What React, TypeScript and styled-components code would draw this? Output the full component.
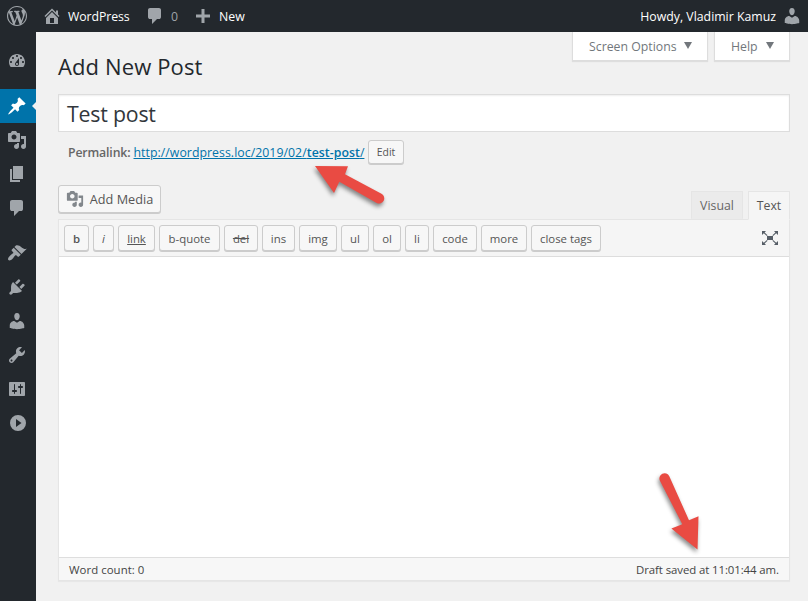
import React from "react";
import styled, { createGlobalStyle } from "styled-components";

const GlobalStyle = createGlobalStyle`
  * { box-sizing: border-box; }
  body {
    margin: 0;
    background: #f1f1f1;
    font-family: "Open Sans", "Noto Sans", sans-serif;
    font-size: 12.3px;
    color: #444;
    overflow: hidden;
  }
`;

const paths = {
  wordpress:
    "M20 10c0-5.51-4.49-10-10-10C4.48 0 0 4.49 0 10c0 5.52 4.48 10 10 10 5.51 0 10-4.48 10-10zM7.78 15.37L4.37 6.22c.55-.02 1.17-.08 1.17-.08.5-.06.44-1.13-.06-1.11 0 0-1.45.11-2.37.11-.18 0-.37 0-.58-.01C4.12 2.69 6.87 1.11 10 1.11c2.33 0 4.45.87 6.05 2.34-.68-.11-1.65.39-1.65 1.58 0 .74.45 1.36.9 2.1.35.61.55 1.36.55 2.46 0 1.49-1.4 5-1.4 5l-3.03-8.37c.54-.02.82-.17.82-.17.5-.05.44-1.25-.06-1.22 0 0-1.44.12-2.38.12-.87 0-2.33-.12-2.33-.12-.5-.03-.56 1.2-.06 1.22l.92.08 1.26 3.41zM17.41 10c.24-.64.74-1.87.43-4.25.7 1.29 1.05 2.71 1.05 4.25 0 3.29-1.73 6.24-4.4 7.78.97-2.59 1.94-5.2 2.92-7.78zM6.1 18.09C3.12 16.65 1.11 13.53 1.11 10c0-1.3.23-2.48.72-3.59C3.25 10.3 4.67 14.2 6.1 18.09zm4.03-6.63l2.58 6.98c-.86.29-1.76.45-2.71.45-.79 0-1.57-.11-2.29-.33.81-2.38 1.62-4.74 2.42-7.1z",
  home: "M16 8.5l1.53 1.53-1.06 1.06L10 4.6l-6.47 6.49-1.06-1.06L10 2.5l4 4v-2h2v4zm-6-2.46l6 5.99V18H4v-5.97zM12 17v-5H8v5h4z",
  comment:
    "M5 2h9q.82 0 1.41.59T16 4v7q0 .82-.59 1.41T14 13h-2l-5 5v-5H5q-.82 0-1.41-.59T3 11V4q0-.82.59-1.41T5 2z",
  plus: "M17 8.5v3h-5.5V17h-3v-5.500H3v-3h5.500V3h3v5.500z",
  dashboard:
    "M3.76 16h12.48c1.1-1.37 1.76-3.11 1.76-5 0-4.42-3.58-8-8-8s-8 3.58-8 8c0 1.89.66 3.63 1.76 5zM10 4c.55 0 1 .45 1 1s-.45 1-1 1-1-.45-1-1 .45-1 1-1zM6 6c.55 0 1 .45 1 1s-.45 1-1 1-1-.45-1-1 .45-1 1-1zm8 0c.55 0 1 .45 1 1s-.45 1-1 1-1-.45-1-1 .45-1 1-1zm-5.370 5.550L12 7v6c0 1.100-.9 2-2 2s-2-.9-2-2c0-.57.24-1.080.63-1.450zM4 10c.55 0 1 .45 1 1s-.45 1-1 1-1-.45-1-1 .45-1 1-1zm12 0c.55 0 1 .45 1 1s-.45 1-1 1-1-.45-1-1 .45-1 1-1zm-5 3c0-.55-.45-1-1-1s-1 .45-1 1 .45 1 1 1 1-.45 1-1z",
  pin: "M10.44 3.02l1.82-1.82 6.36 6.35-1.83 1.82c-1.05-.68-2.48-.57-3.41.36l-.75.75c-.92.93-1.04 2.35-.35 3.41l-1.83 1.82-2.41-2.41-2.8 2.79c-.42.42-3.38 2.71-3.8 2.29s1.86-3.39 2.28-3.81l2.79-2.79L4.1 9.36l1.83-1.82c1.05.69 2.48.57 3.4-.36l.75-.75c.93-.92 1.05-2.35.36-3.41z",
  media:
    "M13 11V4c0-.55-.45-1-1-1h-1.67L9 1H5L3.67 3H2c-.55 0-1 .45-1 1v7c0 .55.45 1 1 1h10c.55 0 1-.45 1-1zM7 4.5c1.38 0 2.500 1.120 2.500 2.500S8.380 9.500 7 9.500 4.500 8.380 4.500 7 5.620 4.500 7 4.500zM14 6h5v10.500c0 1.380-1.120 2.500-2.500 2.500S14 17.880 14 16.500s1.120-2.500 2.500-2.500c.17 0 .34.02.5.05V9h-3V6zm-4 8.050V13h2v3.500c0 1.380-1.120 2.500-2.500 2.500S7 17.880 7 16.500 8.120 14 9.500 14c.17 0 .34.02.5.05z",
  page: "M6 15V2h10v13H6zm-1 1h8v2H3V5h2v11z",
  brush:
    "M14.48 11.06L7.41 3.99l1.5-1.5c.5-.56 2.3-.47 3.51.32 1.21.8 1.43 1.28 2.91 2.1 1.18.64 2.45 1.26 4.45.85zm-.71.71L6.7 4.7 4.93 6.47c-.39.39-.39 1.02 0 1.41l1.06 1.06c.39.39.39 1.03 0 1.42-.6.6-1.43 1.11-2.21 1.69-.35.26-.7.53-1.01.84C1.43 14.23.4 16.08 1.4 17.07c.99 1 2.84-.03 4.18-1.36.31-.31.58-.66.85-1.02.57-.78 1.08-1.61 1.69-2.21.39-.39 1.02-.39 1.41 0l1.06 1.06c.39.39 1.02.39 1.41 0z",
  plug: "M13.11 4.36L9.87 7.6 8 5.73l3.24-3.24c.35-.34 1.05-.2 1.56.32.52.51.66 1.21.31 1.55zm-8 1.77l.91-1.12 9.01 9.01-1.19.84c-.71.71-2.63 1.16-3.82 1.16H6.14L4.9 17.26c-.59.59-1.54.59-2.12 0-.59-.58-.59-1.53 0-2.12l1.24-1.24v-3.88c0-1.13.4-3.19 1.09-3.89zm7.26 3.97l3.24-3.24c.34-.35 1.04-.21 1.55.31.52.51.66 1.21.31 1.55l-3.24 3.25z",
  user: "M10 9.25c-2.27 0-2.73-3.44-2.73-3.44C7 4.02 7.82 2 9.97 2c2.16 0 2.98 2.02 2.71 3.81 0 0-.41 3.44-2.68 3.44zm0 2.57L12.72 10c2.39 0 4.52 2.33 4.52 4.53v2.49s-3.65 1.13-7.24 1.13c-3.65 0-7.24-1.13-7.24-1.13v-2.49c0-2.25 1.94-4.48 4.47-4.48z",
  wrench:
    "M16.68 9.77c-1.34 1.34-3.3 1.67-4.95.99l-5.41 6.52c-.99.99-2.59.99-3.58 0s-.99-2.59 0-3.57l6.52-5.42c-.68-1.65-.35-3.61.99-4.95 1.28-1.28 3.12-1.62 4.72-1.06l-2.89 2.89 2.82 2.82 2.86-2.87c.53 1.58.18 3.39-1.08 4.65zM3.81 16.21c.4.39 1.04.39 1.43 0 .4-.4.4-1.04 0-1.43-.39-.4-1.03-.4-1.43 0-.39.39-.39 1.03 0 1.43z",
  sliders:
    "M18 16V4c0-.55-.45-1-1-1H3c-.55 0-1 .45-1 1v12c0 .55.45 1 1 1h14c.55 0 1-.45 1-1zM8 11h1c.55 0 1 .45 1 1s-.45 1-1 1H8v1.5c0 .28-.22.5-.5.5s-.5-.22-.5-.5V13H6c-.55 0-1-.45-1-1s.45-1 1-1h1V5.500c0-.28.22-.5.5-.5s.5.22.5.5V11zm5-2h-1c-.55 0-1-.45-1-1s.45-1 1-1h1V5.500c0-.28.22-.5.5-.5s.5.22.5.5V7h1c.55 0 1 .45 1 1s-.45 1-1 1h-1v5.500c0 .28-.22.5-.5.5s-.5-.22-.5-.5V9z",
  collapse: "M11 2a8 8 0 1 0 0 16 8 8 0 0 0 0-16zM9 6l5.500 4L9 14z",
  expand:
    "M7 8h6v4H7zM2 3h4L4.600 4.400 7.600 7.300 6.900 8 3.800 5.200 2 7zM18 3v4L16.200 5.200 13.100 8 12.400 7.300 15.400 4.400 14 3zM2 17v-4L3.800 14.800 6.900 12 7.600 12.700 4.600 15.600 6 17zM18 17h-4L15.400 15.600 12.400 12.700 13.100 12 16.200 14.800 18 13z",
};

type IconName = keyof typeof paths;

const Svg = styled.svg`
  display: block;
  flex: none;
  fill: currentColor;
  fill-rule: evenodd;
`;

const Icon = ({ name, size = 20 }: { name: IconName; size?: number }) => (
  <Svg width={size} height={size} viewBox="0 0 20 20" aria-hidden="true">
    <path d={paths[name]} />
  </Svg>
);

const Label = styled.span<{ $track?: number }>`
  white-space: nowrap;
  letter-spacing: ${(p) => p.$track ?? 0}px;
`;

const Page = styled.div`
  display: flex;
  flex-direction: column;
  width: 808px;
  height: 601px;
`;

const AdminBar = styled.header`
  display: flex;
  align-items: center;
  height: 32px;
  flex: none;
  padding: 0 6px 0 7px;
  background: #23282d;
  color: #eee;
`;

const BarItem = styled.div<{ $width?: number; $gap: number; $muted?: boolean }>`
  display: flex;
  align-items: center;
  gap: ${(p) => p.$gap}px;
  width: ${(p) => (p.$width ? `${p.$width}px` : "auto")};
  color: ${(p) => (p.$muted ? "#9ea3a8" : "#fff")};
  svg { color: #a0a5aa; }
`;

const Account = styled(BarItem)`
  margin-left: auto;
`;

const Body = styled.div`
  display: flex;
  flex: 1;
  min-height: 0;
`;

const Sidebar = styled.nav`
  display: flex;
  flex-direction: column;
  width: 36px;
  flex: none;
  padding-top: 12px;
  background: #23282d;
`;

const MenuItem = styled.a<{ $active?: boolean; $spaced?: boolean }>`
  position: relative;
  display: flex;
  align-items: center;
  height: 34px;
  margin-top: ${(p) => (p.$spaced ? 11 : 0)}px;
  padding-left: 7px;
  color: ${(p) => (p.$active ? "#fff" : "#a0a5aa")};
  background: ${(p) => (p.$active ? "#0073aa" : "transparent")};
  &::after {
    content: "";
    display: ${(p) => (p.$active ? "block" : "none")};
    position: absolute;
    right: 0;
    top: 13px;
    border: 4px solid transparent;
    border-left-width: 0;
    border-right-color: #f1f1f1;
  }
`;

const Content = styled.main`
  display: flex;
  flex-direction: column;
  flex: 1;
  padding: 0 18px 0 22px;
`;

const Heading = styled.div`
  display: flex;
  justify-content: space-between;
  height: 62px;
`;

const Title = styled.h1`
  margin: 18px 0 0;
  font-size: 22px;
  line-height: 32px;
  font-weight: 400;
  letter-spacing: 0.12px;
  color: #23282d;
`;

const ScreenTabs = styled.div`
  display: flex;
  gap: 6px;
`;

const ScreenTab = styled.button<{ $width: number }>`
  display: flex;
  align-items: center;
  justify-content: space-between;
  width: ${(p) => p.$width}px;
  height: 29px;
  padding: 0 15px 0 16px;
  border: 1px solid #ddd;
  border-top: 0;
  background: #fff;
  box-shadow: 0 1px 1px rgba(0, 0, 0, 0.08);
  color: #72777c;
  font: inherit;
`;

const Caret = styled.i`
  margin-bottom: 2px;
  border: 4.5px solid transparent;
  border-top: 7px solid #72777c;
  border-bottom: 0;
`;

const TitleField = styled.div`
  display: flex;
  align-items: center;
  height: 38px;
  padding: 0 8px;
  border: 1px solid #ddd;
  background: #fff;
  box-shadow: inset 0 1px 2px rgba(0, 0, 0, 0.07);
  font-size: 21.3px;
  color: #32373c;
`;

const Permalink = styled.div`
  display: flex;
  align-items: center;
  height: 24px;
  margin-top: 8px;
  padding-left: 10px;
  color: #666;
`;

const PermalinkLabel = styled.strong`
  width: 65.5px;
  font-weight: 600;
  letter-spacing: -0.15px;
  white-space: nowrap;
`;

const PermalinkUrl = styled.a`
  width: 231px;
  margin-right: 3.5px;
  color: #0073aa;
  text-decoration: underline;
  white-space: nowrap;
  letter-spacing: 0.04px;
  b { font-weight: 600; }
`;

const Button = styled.button<{ $width: number; $height: number; $size?: number }>`
  display: flex;
  align-items: center;
  justify-content: center;
  gap: 6px;
  flex: none;
  width: ${(p) => p.$width}px;
  height: ${(p) => p.$height}px;
  padding: 0;
  border: 1px solid #ccc;
  border-radius: 3px;
  background: #f7f7f7;
  box-shadow: 0 1px 0 #ccc;
  color: #555;
  font-family: inherit;
  font-size: ${(p) => p.$size ?? 11}px;
  white-space: nowrap;
  svg { color: #82878c; }
`;

const EditorTools = styled.div`
  display: flex;
  justify-content: space-between;
  height: 34px;
  margin-top: 21px;
`;

const ModeTabs = styled.div`
  display: flex;
  gap: 5px;
  align-items: flex-start;
  margin-top: 6px;
`;

const ModeTab = styled.button<{ $width: number; $active?: boolean }>`
  position: relative;
  width: ${(p) => p.$width}px;
  height: ${(p) => (p.$active ? 29 : 28)}px;
  padding: 0;
  border: 1px solid #e5e5e5;
  border-bottom-color: ${(p) => (p.$active ? "#f5f5f5" : "#ebebeb")};
  background: ${(p) => (p.$active ? "#f5f5f5" : "#ebebeb")};
  color: ${(p) => (p.$active ? "#555" : "#666")};
  font: inherit;
`;

const Editor = styled.section`
  display: flex;
  flex-direction: column;
  height: 362px;
  border: 1px solid #e5e5e5;
  background: #fff;
  box-shadow: 0 1px 1px rgba(0, 0, 0, 0.04);
`;

const Toolbar = styled.div`
  display: flex;
  align-items: flex-start;
  gap: 4px;
  height: 37px;
  padding: 5px 9px 0 5px;
  border-bottom: 1px solid #ddd;
  background: #f5f5f5;
`;

const ToolButton = styled(Button)<{ $kind?: string }>`
  padding-top: 1px;
  font-weight: ${(p) => (p.$kind === "b" ? 600 : 400)};
  font-style: ${(p) => (p.$kind === "i" ? "italic" : "normal")};
  text-decoration: ${(p) =>
    p.$kind === "link" ? "underline" : p.$kind === "del" ? "line-through" : "none"};
`;

const Fullscreen = styled.div`
  margin: 3px 0 0 auto;
  color: #555d66;
`;

const TextArea = styled.div`
  flex: 1;
`;

const StatusBar = styled.footer`
  display: flex;
  align-items: center;
  justify-content: space-between;
  height: 23px;
  padding: 1px 10px 0;
  border-top: 1px solid #dedede;
  background: #f7f7f7;
  font-size: 11.4px;
`;

const Annotations = styled.svg`
  position: absolute;
  left: 0;
  top: 0;
  pointer-events: none;
  fill: #e94b43;
  filter: drop-shadow(-1px 3px 2px rgba(0, 0, 0, 0.45));
`;

const menu: { icon: IconName; active?: boolean; spaced?: boolean }[] = [
  { icon: "dashboard" },
  { icon: "pin", active: true, spaced: true },
  { icon: "media" },
  { icon: "page" },
  { icon: "comment" },
  { icon: "brush", spaced: true },
  { icon: "plug" },
  { icon: "user" },
  { icon: "wrench" },
  { icon: "sliders" },
  { icon: "collapse" },
];

const tags: [string, number][] = [
  ["b", 25], ["i", 21], ["link", 37], ["b-quote", 61], ["del", 34], ["ins", 33],
  ["img", 38], ["ul", 28], ["ol", 28], ["li", 24], ["code", 44], ["more", 46],
  ["close tags", 70],
];

export default function App() {
  return (
    <>
      <GlobalStyle />
      <Page>
        <AdminBar>
          <BarItem $gap={0} $width={35}><Icon name="wordpress" /></BarItem>
          <BarItem $gap={6} $width={103}><Icon name="home" /><Label $track={-0.08}>WordPress</Label></BarItem>
          <BarItem $gap={6} $width={48} $muted><Icon name="comment" /><Label>0</Label></BarItem>
          <BarItem $gap={6}><Icon name="plus" /><Label>New</Label></BarItem>
          <Account $gap={6}><Label>Howdy, Vladimir Kamuz</Label><Icon name="user" /></Account>
        </AdminBar>
        <Body>
          <Sidebar>
            {menu.map((m) => (
              <MenuItem key={m.icon} $active={m.active} $spaced={m.spaced}>
                <Icon name={m.icon} />
              </MenuItem>
            ))}
          </Sidebar>
          <Content>
            <Heading>
              <Title>Add New Post</Title>
              <ScreenTabs>
                <ScreenTab $width={136}><Label>Screen Options</Label><Caret /></ScreenTab>
                <ScreenTab $width={76}><Label>Help</Label><Caret /></ScreenTab>
              </ScreenTabs>
            </Heading>
            <TitleField><Label $track={-0.2}>Test post</Label></TitleField>
            <Permalink>
              <PermalinkLabel>Permalink:</PermalinkLabel>
              <PermalinkUrl>http://wordpress.loc/2019/02/<b>test-post</b>/</PermalinkUrl>
              <Button $width={36} $height={24} $size={10.4}>Edit</Button>
            </Permalink>
            <EditorTools>
              <Button $width={103} $height={28} $size={12.7}><Icon name="media" size={18} />Add Media</Button>
              <ModeTabs>
                <ModeTab $width={52}>Visual</ModeTab>
                <ModeTab $width={42} $active>Text</ModeTab>
              </ModeTabs>
            </EditorTools>
            <Editor>
              <Toolbar>
                {tags.map(([tag, width]) => (
                  <ToolButton key={tag} $kind={tag} $width={width} $height={26} $size={11.4}>{tag}</ToolButton>
                ))}
                <Fullscreen><Icon name="expand" /></Fullscreen>
              </Toolbar>
              <TextArea />
              <StatusBar>
                <Label $track={0.05}>Word count: 0</Label>
                <Label $track={-0.08}>Draft saved at 11:01:44 am.</Label>
              </StatusBar>
            </Editor>
          </Content>
        </Body>
      </Page>
      <Annotations width="808" height="601" viewBox="0 0 808 601">
        <path d="M315 166L348 166.300L345 174.300L381.500 193.800A5 5 0 0 1 376.700 203L339.300 181.700L334 193Z" />
        <path d="M697.500 549.500L671.400 528.600L682.300 524.300L659.900 480.700A5.200 5.200 0 0 1 669.300 476.200L689 520.300L698.500 516.300Z" />
      </Annotations>
    </>
  );
}
